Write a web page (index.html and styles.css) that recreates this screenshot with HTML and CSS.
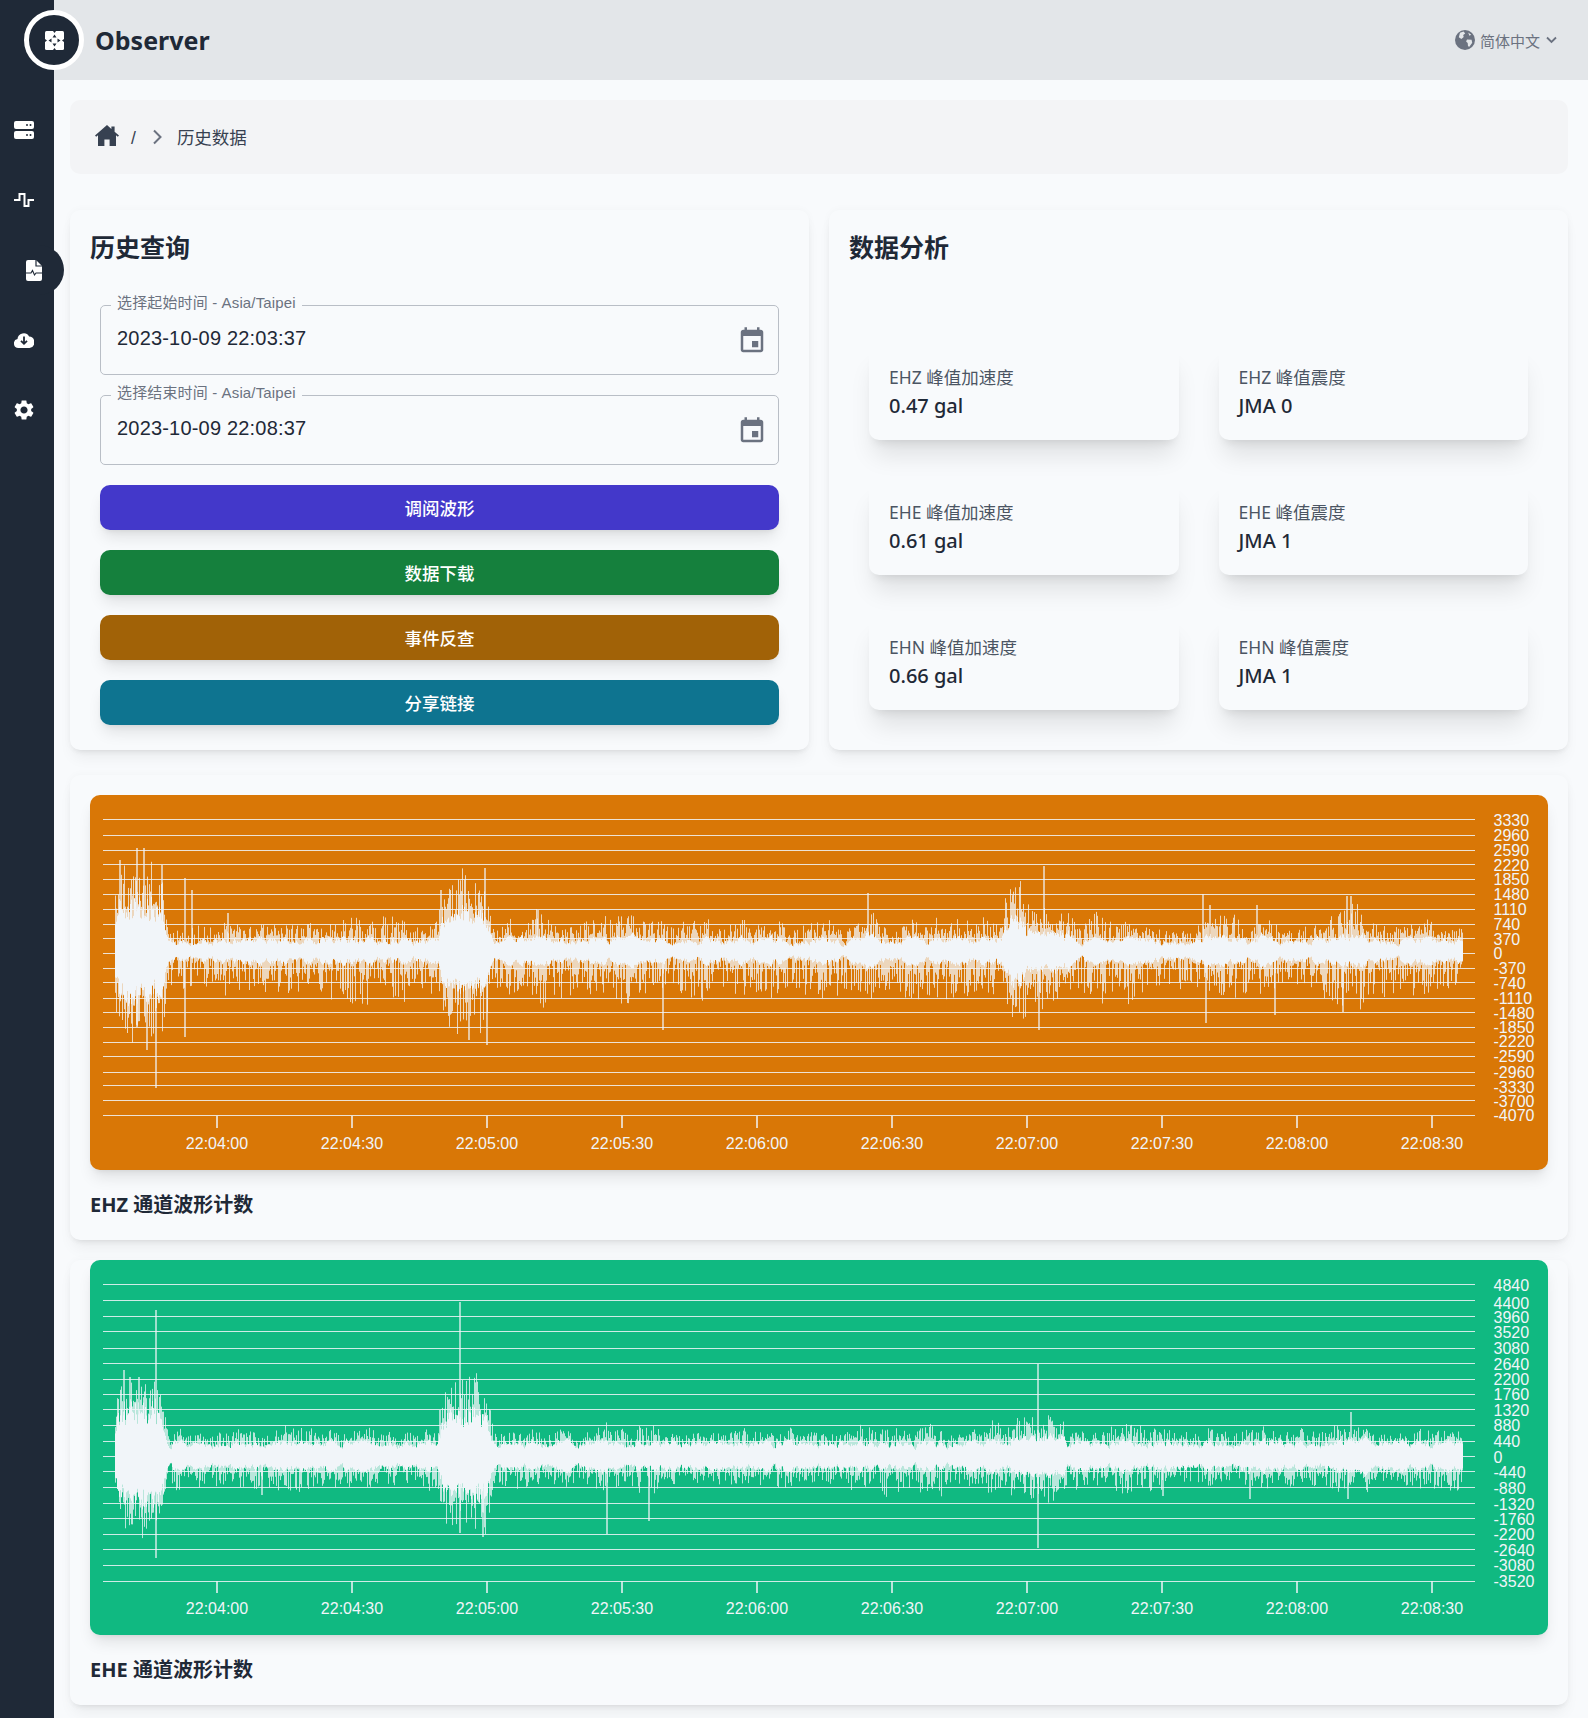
FILE: index.html
```html
<!DOCTYPE html>
<html lang="zh-CN">
<head>
    <meta charset="UTF-8">
    <meta name="viewport" content="width=device-width, initial-scale=1.0">
    <title>Observer</title>
    <link rel="stylesheet" href="styles.css">
</head>
<body>
    <div class="app">
        <nav class="sidebar">
            <a class="nav-item">
                <svg class="nav-icon" width="20" height="18" viewBox="0 0 20 18">
                    <rect width="20" height="8" rx="2" fill="#fff"/>
                    <rect y="10" width="20" height="8" rx="2" fill="#fff"/>
                    <circle cx="13" cy="4" r="1" fill="#1f2937"/>
                    <circle cx="16.5" cy="4" r="1" fill="#1f2937"/>
                    <circle cx="13" cy="14" r="1" fill="#1f2937"/>
                    <circle cx="16.5" cy="14" r="1" fill="#1f2937"/>
                </svg>
            </a>
            <a class="nav-item">
                <svg class="nav-icon" width="20" height="16" viewBox="0 0 20 16">
                    <path d="M0 8h5.5V2h5v12h4V8H20" fill="none" stroke="#fff" stroke-width="2"/>
                </svg>
            </a>
            <a class="nav-item active">
                <svg class="nav-icon" width="16" height="21" viewBox="0 0 16 21">
                    <path d="M2 0h8l6 6v13a2 2 0 0 1-2 2H2a2 2 0 0 1-2-2V2a2 2 0 0 1 2-2z" fill="#fff"/>
                    <path d="M10 0v6h6" fill="none" stroke="#1f2937" stroke-width="1.2"/>
                    <path d="M0 13h5l1.5-2.5 2 4.5 1.5-2h6" fill="none" stroke="#1f2937" stroke-width="1.1"/>
                </svg>
            </a>
            <a class="nav-item">
                <svg class="nav-icon" width="20" height="17" viewBox="0 1 20 17">
                    <path d="M4.5 17a4.5 4.5 0 0 1-1-8.900 6.200 6.200 0 0 1 11.600-2.600A5.800 5.800 0 0 1 15.500 17z" fill="#fff"/>
                    <path d="M10 5.500v7M7 9.800l3 3 3-3" fill="none" stroke="#1f2937" stroke-width="1.800"/>
                </svg>
            </a>
            <a class="nav-item">
                <svg class="nav-icon" width="20" height="20" viewBox="2 2 20 20">
                    <path fill="#fff" d="M19.14 12.94c.04-.3.06-.61.06-.94 0-.32-.02-.64-.07-.94l2.03-1.58c.18-.14.23-.41.12-.61l-1.92-3.32c-.12-.22-.37-.29-.59-.22l-2.39.96c-.5-.38-1.03-.7-1.62-.94l-.36-2.54c-.04-.24-.24-.41-.48-.41h-3.84c-.24 0-.43.17-.47.41l-.36 2.54c-.59.24-1.13.57-1.62.94l-2.39-.96c-.22-.08-.47 0-.59.22L2.74 8.87c-.12.21-.08.47.12.61l2.03 1.58c-.05.3-.09.63-.09.94s.02.64.07.94l-2.03 1.58c-.18.14-.23.41-.12.61l1.92 3.32c.12.22.37.29.59.22l2.39-.96c.5.38 1.03.7 1.62.94l.36 2.54c.05.24.24.41.48.41h3.84c.24 0 .44-.17.47-.41l.36-2.54c.59-.24 1.13-.56 1.62-.94l2.39.96c.22.08.47 0 .59-.22l1.92-3.32c.12-.22.07-.47-.12-.61l-2.01-1.58zM12 15.6c-1.98 0-3.6-1.62-3.6-3.6s1.62-3.6 3.6-3.6 3.6 1.62 3.6 3.6-1.62 3.6-3.6 3.6z"/>
                </svg>
            </a>
        </nav>

        <div class="content">
            <header class="header">
                <div class="logo">
                    <svg width="19" height="19" viewBox="0 0 19 19">
                        <rect width="19" height="19" rx="1.500" fill="#fff"/>
                        <path d="M8 0h3L9.500 2zM8 19h3l-1.500-2zM0 8v3l2-1.500zM19 8v3l-2-1.500z" fill="#1f2937"/>
                        <path d="M9.500 3.500 7.500 6.500h4zM9.500 15.500l-2-3h4zM3.500 9.500l3-2v4zM15.500 9.500l-3-2v4z" fill="#1f2937"/>
                    </svg>
                </div>
                <span class="brand">Observer</span>
                <div class="lang">
                    <svg width="20" height="20" viewBox="0 0 20 20">
                        <circle cx="10" cy="10" r="10" fill="#6b7280"/>
                        <path d="M5 2.800 8.600 1.600l1.600 1.800-2 1.500.5 2L6.400 9 3.800 7.200zM12 9.400l4.600.3.6 3-2.800 4-1.400-.4-.3-3.200-1.600-1.600zM13.200 2.600l3 2.200-1.800.9z" fill="#e3e6e9"/>
                    </svg>
                    <span>简体中文</span>
                    <svg class="lang-arrow" width="11" height="8" viewBox="0 0 11 8">
                        <path d="M1 1.500l4.500 4.500L10 1.500" fill="none" stroke="#6b7280" stroke-width="1.800"/>
                    </svg>
                </div>
            </header>

            <main class="main">
                <div class="breadcrumb">
                    <svg class="crumb-home" width="24" height="21" viewBox="0 0 24 21">
                        <path d="M12 0 0 10.600l1.200 1.200L3 10.300V21h6.400v-6.600h5.200V21H21V10.300l1.800 1.500 1.200-1.200-4.400-3.900V1.400h-3.200v2.700z" fill="#374151"/>
                    </svg>
                    <span class="crumb-sep">/</span>
                    <svg width="11" height="16" viewBox="0 0 11 16">
                        <path d="M2 1.500 8.500 8 2 14.500" fill="none" stroke="#6b7280" stroke-width="2"/>
                    </svg>
                    <span class="crumb-text">历史数据</span>
                </div>

                <div class="top-grid">
                    <section class="card">
                        <h2 class="card-title">历史查询</h2>
                        <div class="query-form">
                            <fieldset class="date-field">
                                <legend>选择起始时间 - Asia/Taipei</legend>
                                <div class="date-row">
                                    <span class="date-value">2023-10-09 22:03:37</span>
                                    <svg class="date-icon" width="30" height="30" viewBox="0 0 24 24">
                                        <path fill="#6b7280" d="M17 12h-5v5h5v-5zM16 1v2H8V1H6v2H5c-1.11 0-1.99.9-1.99 2L3 19c0 1.100.89 2 2 2h14c1.100 0 2-.9 2-2V5c0-1.100-.9-2-2-2h-1V1h-2zm3 18H5V8h14v11z"/>
                                    </svg>
                                </div>
                            </fieldset>
                            <fieldset class="date-field">
                                <legend>选择结束时间 - Asia/Taipei</legend>
                                <div class="date-row">
                                    <span class="date-value">2023-10-09 22:08:37</span>
                                    <svg class="date-icon" width="30" height="30" viewBox="0 0 24 24">
                                        <path fill="#6b7280" d="M17 12h-5v5h5v-5zM16 1v2H8V1H6v2H5c-1.11 0-1.99.9-1.99 2L3 19c0 1.100.89 2 2 2h14c1.100 0 2-.9 2-2V5c0-1.100-.9-2-2-2h-1V1h-2zm3 18H5V8h14v11z"/>
                                    </svg>
                                </div>
                            </fieldset>
                            <div class="button-list">
                                <button class="button button-indigo">调阅波形</button>
                                <button class="button button-green">数据下载</button>
                                <button class="button button-yellow">事件反查</button>
                                <button class="button button-cyan">分享链接</button>
                            </div>
                        </div>
                    </section>

                    <section class="card">
                        <h2 class="card-title">数据分析</h2>
                        <div class="stat-grid">
                            <div class="stat">
                                <div class="stat-label">EHZ 峰值加速度</div>
                                <div class="stat-value">0.47 gal</div>
                            </div>
                            <div class="stat">
                                <div class="stat-label">EHZ 峰值震度</div>
                                <div class="stat-value">JMA 0</div>
                            </div>
                            <div class="stat">
                                <div class="stat-label">EHE 峰值加速度</div>
                                <div class="stat-value">0.61 gal</div>
                            </div>
                            <div class="stat">
                                <div class="stat-label">EHE 峰值震度</div>
                                <div class="stat-value">JMA 1</div>
                            </div>
                            <div class="stat">
                                <div class="stat-label">EHN 峰值加速度</div>
                                <div class="stat-value">0.66 gal</div>
                            </div>
                            <div class="stat">
                                <div class="stat-label">EHN 峰值震度</div>
                                <div class="stat-value">JMA 1</div>
                            </div>
                        </div>
                    </section>
                </div>

                <section class="card wave-card">
                    <div class="chart chart-amber"><svg id="chartEhz" viewBox="0 0 1458 375"></svg></div>
                    <h3 class="chart-title">EHZ 通道波形计数</h3>
                </section>

                <section class="card wave-card wave-card-next">
                    <div class="chart chart-emerald"><svg id="chartEhe" viewBox="0 0 1458 375"></svg></div>
                    <h3 class="chart-title">EHE 通道波形计数</h3>
                </section>
            </main>
        </div>
    </div>

    <script src="chart.js"></script>
</body>
</html>
```

FILE: styles.css
```css
body {
    margin: 0;
    background-color: #f8fafc;
    color: #1f2937;
    font-family: "Noto Sans", "Noto Sans CJK SC", sans-serif;
}

.app {
    display: flex;
    min-height: 1718px;
}

.sidebar {
    position: relative;
    z-index: 2;
    flex: none;
    display: flex;
    flex-direction: column;
    gap: 20px;
    box-sizing: border-box;
    width: 54px;
    padding-top: 105px;
    background: #1f2937;
}

.nav-item {
    display: flex;
    align-items: center;
    height: 50px;
    padding-left: 14px;
}

.nav-item.active {
    margin-right: -10px;
    padding-left: 26px;
    background: #1f2937;
    border-radius: 0 25px 25px 0;
}

.content {
    flex: 1;
    min-width: 0;
}

.header {
    position: relative;
    z-index: 3;
    display: flex;
    align-items: center;
    height: 80px;
    background: #e3e6e9;
}

.logo {
    display: flex;
    align-items: center;
    justify-content: center;
    box-sizing: border-box;
    width: 60px;
    height: 60px;
    margin-left: -30px;
    background: #1f2937;
    border: 5px solid #fff;
    border-radius: 50%;
}

.brand {
    margin-left: 11px;
    font-size: 25px;
    font-weight: 700;
}

.lang {
    display: flex;
    align-items: center;
    gap: 5px;
    margin-left: auto;
    padding-right: 31px;
    color: #6b7280;
    font-size: 15px;
}

.lang span {
    margin-top: 1px;
}

.lang-arrow {
    margin-left: 1px;
}

.main {
    padding: 20px 20px 13px 16px;
}

.breadcrumb {
    display: flex;
    align-items: center;
    height: 74px;
    margin-bottom: 36px;
    padding-left: 25px;
    background: #f3f4f6;
    border-radius: 10px;
    color: #374151;
    font-size: 17.5px;
}

.crumb-home {
    margin-top: -3px;
}

.crumb-sep {
    margin: 2px 16px 0 12px;
    font-family: "Liberation Sans", sans-serif;
}

.crumb-text {
    margin-left: 14px;
    margin-top: -2px;
}

.top-grid {
    display: grid;
    grid-template-columns: 1fr 1fr;
    gap: 20px;
}

.card {
    box-sizing: border-box;
    padding: 20px;
    background: #f8fafc;
    border-radius: 10px;
    box-shadow: 0 10px 15px -3px rgba(0, 0, 0, 0.06), 0 4px 6px -4px rgba(0, 0, 0, 0.1), 0 0 8px rgba(0, 0, 0, 0.03);
}

.card-title {
    margin: 0;
    font-size: 25px;
    line-height: 35px;
    font-weight: 700;
}

.query-form {
    margin-top: 28px;
    padding: 0 10px 5px;
}

.date-field {
    min-width: 0;
    margin: 0 0 8px;
    padding: 0 16px;
    border: 1px solid #b9bec6;
    border-radius: 5px;
}

.date-field legend {
    margin-left: -6px;
    padding: 0 6px 4px;
    color: #6b7280;
    font-family: "Liberation Sans", "Noto Sans CJK SC", sans-serif;
    font-size: 15px;
    line-height: 20px;
    letter-spacing: 0.14px;
}

.date-row {
    display: flex;
    align-items: flex-start;
    justify-content: space-between;
    height: 57px;
    padding-top: 6px;
    box-sizing: border-box;
}

.date-value {
    font-family: "Liberation Sans", sans-serif;
    font-size: 20px;
    line-height: 30px;
    letter-spacing: 0.19px;
}

.date-icon {
    margin: 3px -5px 0 0;
}

.button-list {
    display: flex;
    flex-direction: column;
    gap: 20px;
    margin-top: 20px;
}

.button {
    height: 45px;
    padding: 0;
    border: none;
    border-radius: 10px;
    color: #fff;
    font-family: inherit;
    font-size: 17.5px;
    font-weight: 500;
    box-shadow: 0 10px 15px -3px rgba(0, 0, 0, 0.1), 0 4px 6px -4px rgba(0, 0, 0, 0.1);
}

.button-indigo {
    background: #4338ca;
}

.button-green {
    background: #15803d;
}

.button-yellow {
    background: #a16207;
}

.button-cyan {
    background: #0e7490;
}

.stat-grid {
    display: grid;
    grid-template-columns: 1fr 1fr;
    gap: 40px;
    margin-top: 80px;
    padding: 0 20px 20px;
}

.stat {
    padding: 20px;
    background: #f8fafc;
    border-radius: 10px;
    box-shadow: 0 20px 25px -5px rgba(0, 0, 0, 0.1), 0 8px 10px -6px rgba(0, 0, 0, 0.1);
}

.stat-label {
    color: #4b5563;
    font-size: 17.5px;
    line-height: 25px;
}

.stat-value {
    padding-top: 1px;
    margin-bottom: -1px;
    font-size: 20px;
    line-height: 30px;
    font-weight: 500;
}

.wave-card {
    margin-top: 25px;
}

.wave-card-next {
    margin-top: 20px;
    padding-top: 0;
}

.chart {
    height: 375px;
    border-radius: 10px;
    box-shadow: 0 10px 15px -3px rgba(0, 0, 0, 0.1), 0 4px 6px -4px rgba(0, 0, 0, 0.1);
}

.chart svg {
    display: block;
    width: 100%;
    height: 100%;
}

.chart-amber {
    background: #d97706;
}

.chart-emerald {
    background: #10b981;
}

.chart-title {
    margin: 20px 0 0;
    font-size: 20px;
    line-height: 30px;
    font-weight: 700;
}

.grid-line {
    stroke: #f1f5f9;
    stroke-width: 1;
    opacity: 0.85;
}

.tick {
    stroke: #f1f5f9;
    stroke-width: 1.5;
}

.axis-label {
    fill: #f1f5f9;
    font-family: "Liberation Sans", sans-serif;
    font-size: 16px;
}

.wave-fuzz {
    fill: none;
    stroke: #f1f5f9;
    stroke-width: 1;
    opacity: 0.75;
}

.wave-body {
    fill: none;
    stroke: #f1f5f9;
    stroke-width: 1;
}

.wave-spike {
    fill: none;
    stroke: #f1f5f9;
    stroke-width: 1.5;
    opacity: 0.85;
}
```

FILE: chart.js
```js
// Waveform charts, drawn into the two svg boxes. Coordinates are chart pixels.
const SVG_NS = 'http://www.w3.org/2000/svg';
const TIMES = ['22:04:00', '22:04:30', '22:05:00', '22:05:30', '22:06:00', '22:06:30', '22:07:00', '22:07:30', '22:08:00', '22:08:30'];

const charts = [
    {
        id: 'chartEhz',
        seed: 11,
        first: 3330,
        step: 370,
        center: 156,
        body: [10, 10],
        reach: [17, 34],
        downBurst: 0.35,
        lines: [24.5, 40.5, 55.5, 69.5, 84.5, 99.5, 114.5, 129.5, 143.5, 158.5, 173.5, 187.5, 203.5, 217.5, 232.5, 247.5, 261.5, 277.5, 290.5, 305.5, 320.5],
        labels: [24.7, 40, 54.7, 70, 84, 99.3, 114.3, 129, 144.3, 158, 173.3, 188, 203.3, 218.3, 232.3, 246.3, 261, 277.3, 291.5, 305.5, 319.7],
        // centre x, half width, strength
        bursts: [[50, 27, 1.2], [375, 27, 1.05], [450, 10, 0.3], [530, 40, 0.28], [778, 9, 0.4], [910, 25, 0.35], [950, 35, 0.6], [1010, 10, 0.25], [1130, 25, 0.35], [1180, 12, 0.3], [1260, 20, 0.4]],
        // x, top y, bottom y
        spikes: [[30, 65], [47, 53, 232], [54, 53], [72, 70], [95, 83, 242], [102, 95], [66, 0, 293], [57, 0, 255], [138, 118], [351, 95], [395, 73], [379, 0, 245], [397, 0, 250], [448, 115], [573, 0, 235], [778, 98], [954, 71], [949, 0, 235], [1113, 99], [1116, 0, 228], [1120, 110], [1167, 110], [1185, 0, 220], [1253, 0, 217], [1261, 101], [1257, 101]]
    },
    {
        id: 'chartEhe',
        seed: 29,
        first: 4840,
        step: 440,
        center: 196,
        body: [12, 12],
        reach: [13, 20],
        downBurst: 0.6,
        lines: [24.5, 40.5, 56.5, 71.5, 88.5, 103.5, 119.5, 134.5, 149.5, 165.5, 181.5, 196.5, 211.5, 227.5, 243.5, 258.5, 274.5, 289.5, 305.5, 321.5],
        labels: [25.3, 42.7, 57.3, 72.3, 88.3, 103.7, 119.3, 134.3, 150.3, 165.3, 180.7, 197.3, 212.3, 228.3, 243.7, 259, 274.3, 289.7, 305.3, 320.7],
        bursts: [[50, 27, 1.15], [375, 27, 1.05], [520, 14, 0.3], [560, 10, 0.25], [910, 14, 0.35], [950, 28, 0.5], [1050, 30, 0.2], [1150, 40, 0.2], [1260, 20, 0.3]],
        spikes: [[66, 50, 298], [370, 42, 273], [393, 0, 277], [34, 110], [40, 117], [49, 117], [172, 0, 235], [350, 150], [1261, 152], [1258, 0, 239], [1160, 0, 239], [1073, 0, 236], [948, 104, 288], [517, 0, 274], [559, 0, 261]]
    }
];

// Small seeded generator so the picture is the same on every load
function makeRandom(seed) {
    return function () {
        seed = (seed + 0x6d2b79f5) | 0;
        let t = Math.imul(seed ^ (seed >>> 15), 1 | seed);
        t = (t + Math.imul(t ^ (t >>> 7), 61 | t)) ^ t;
        return ((t ^ (t >>> 14)) >>> 0) / 4294967296;
    };
}

function addEl(svg, name, attrs, text) {
    const el = document.createElementNS(SVG_NS, name);
    Object.keys(attrs).forEach(key => el.setAttribute(key, attrs[key]));
    if (text !== undefined) el.textContent = text;
    svg.appendChild(el);
}

function burstAt(x, bursts) {
    let total = 0;
    bursts.forEach(([c, w, a]) => {
        total += a * Math.exp(-Math.pow((x - c) / w, 10));
    });
    return total;
}

function drawChart(cfg) {
    const svg = document.getElementById(cfg.id);
    const random = makeRandom(cfg.seed);

    cfg.lines.forEach(y => {
        addEl(svg, 'line', { x1: 13, x2: 1385, y1: y, y2: y, class: 'grid-line' });
    });

    let fuzz = '';
    let body = '';
    let wobble = 0;
    let slow = 0;
    for (let x = 25.5; x < 1373; x += 1) {
        const a = burstAt(x, cfg.bursts);
        wobble = wobble * 0.7 + (random() - 0.5) * 1.1;
        slow = slow * 0.97 + (random() - 0.5) * 0.09;
        // Only the strong bursts widen the solid part, weak ones just raise the spikes
        const gain = a * a * 24;
        const up = cfg.body[0] + wobble * 5 + gain * (0.6 + 0.7 * random());
        const down = cfg.body[1] + wobble * 5 + gain * (0.6 + 0.7 * random());
        const scale = 1 + slow * 1.5;
        const upReach = up + Math.pow(random(), 1.5) * cfg.reach[0] * scale * (1 + a * 1.4);
        const downReach = down + Math.pow(random(), 1.7) * cfg.reach[1] * scale * (1 + a * cfg.downBurst);
        body += `M${x} ${(cfg.center - up).toFixed(1)}V${(cfg.center + down).toFixed(1)}`;
        fuzz += `M${x} ${(cfg.center - upReach).toFixed(1)}V${(cfg.center + downReach).toFixed(1)}`;
    }
    addEl(svg, 'path', { d: fuzz, class: 'wave-fuzz' });
    addEl(svg, 'path', { d: body, class: 'wave-body' });

    let spikes = '';
    cfg.spikes.forEach(([x, top, bottom]) => {
        spikes += `M${x} ${top || cfg.center}V${bottom || cfg.center}`;
    });
    addEl(svg, 'path', { d: spikes, class: 'wave-spike' });

    cfg.labels.forEach((y, i) => {
        addEl(svg, 'text', { x: 1403.5, y: y + 6, class: 'axis-label' }, cfg.first - cfg.step * i);
    });

    TIMES.forEach((time, i) => {
        const x = 127 + 135 * i;
        addEl(svg, 'line', { x1: x, x2: x, y1: 321, y2: 333, class: 'tick' });
        addEl(svg, 'text', { x: x, y: 354, 'text-anchor': 'middle', class: 'axis-label' }, time);
    });
}

charts.forEach(drawChart);
```
